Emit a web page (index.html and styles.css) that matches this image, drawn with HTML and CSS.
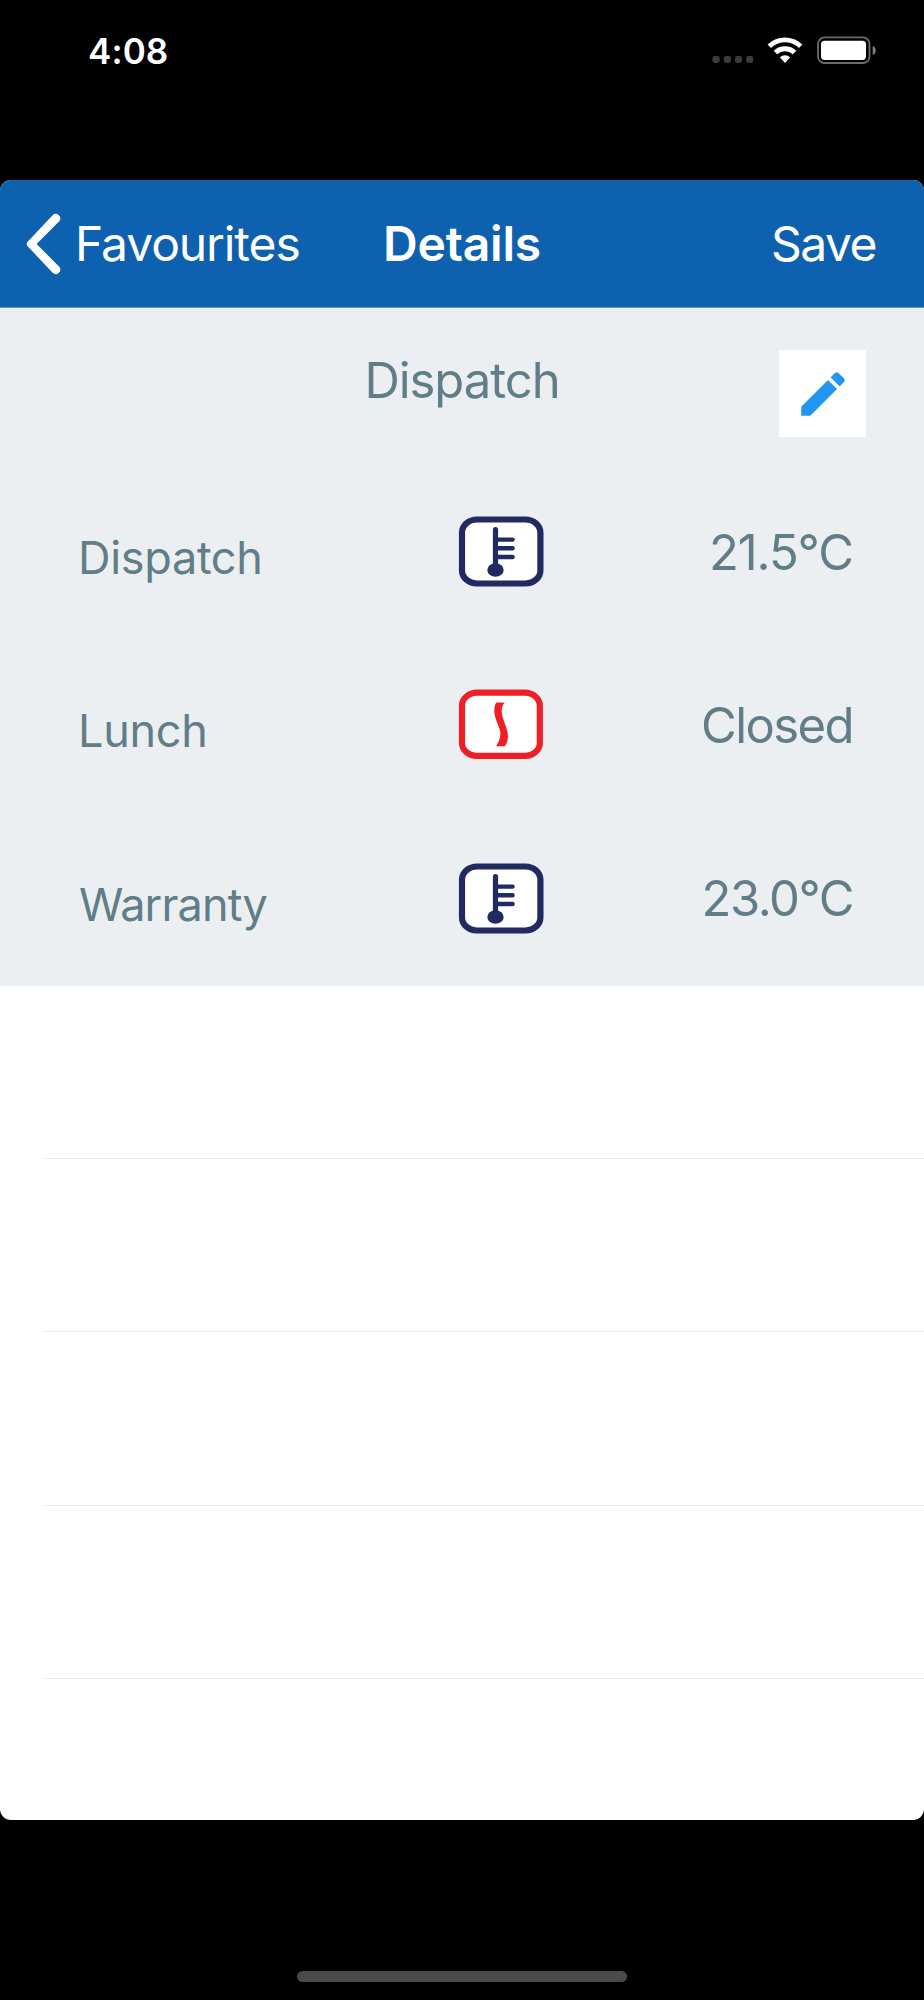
FILE: index.html
```html
<!DOCTYPE html>
<html lang="en">
<head>
<meta charset="utf-8">
<title>Details</title>
<link rel="stylesheet" href="styles.css">
</head>
<body>
<svg class="defs" aria-hidden="true">
  <symbol id="thermometer" viewBox="0 0 86 72">
    <rect x="4" y="3.500" width="78.400" height="64" rx="15" ry="13" fill="#fff" stroke="#212b62" stroke-width="6.200"/>
    <g stroke="#212b62" stroke-linecap="round" fill="none">
      <path d="M37.5 13.6V52" stroke-width="5.2"/>
      <path d="M37.5 23.6H54.6M37.5 32.2H54.6M37.5 41H54.6" stroke-width="4.4"/>
    </g>
    <ellipse cx="37.5" cy="54" rx="8.2" ry="6.8" fill="#212b62"/>
  </symbol>
  <symbol id="contact" viewBox="0 0 86 72">
    <rect x="4" y="3.7" width="77.8" height="63.2" rx="15" ry="13" fill="#fff" stroke="#ee1f27" stroke-width="6.200"/>
    <path d="M38.300 13.500H46.600C43.500 17.500 43.200 22 44.400 27C46 33.500 50 41 50 47.500C50 51 48.800 54.500 47 57.300H38C41 53 43 47 42.200 42.500C41.200 37 36.300 29.500 36.300 22C36.300 18.500 36.800 15.500 38.300 13.500Z" fill="#ee1f27"/>
  </symbol>
</svg>
<div class="status">
  <span class="time">4:08</span>
  <div class="indicators">
    <svg class="dots" width="42" height="8" viewBox="0 0 42 8" fill="#3b3b3b"><rect x=".5" y="0" width="7.2" height="7" rx="2.4"/><rect x="11.700" y="0" width="7.200" height="7" rx="2.400"/><rect x="22.900" y="0" width="7.200" height="7" rx="2.400"/><rect x="34.100" y="0" width="7.200" height="7" rx="2.400"/></svg>
    <svg class="wifi" width="36" height="28" viewBox="0 0 36 28" fill="#fff"><path d="M.6 8.400a25.200 25.200 0 0 1 34.800 0L32 12a20.200 20.200 0 0 0-28 0z"/><path d="M6.700 14.800a16.500 16.500 0 0 1 22.600 0L25.800 18.300a11.400 11.400 0 0 0-15.600 0z"/><path d="M12.900 21.300a7.600 7.600 0 0 1 10.200 0L18 27z"/></svg>
    <svg class="battery" width="60" height="28" viewBox="0 0 60 28"><rect x="1" y="1.400" width="51.500" height="25.600" rx="6.500" fill="none" stroke="#6b6b6b" stroke-width="1.800"/><rect x="4" y="4.700" width="45" height="19.200" rx="3.600" fill="#fff"/><path d="M55.700 9.900c4 1.500 4 7.500 0 9z" fill="#808080"/></svg>
  </div>
</div>
<main class="sheet">
  <header class="nav">
    <div class="back">
      <svg width="37" height="62" viewBox="0 0 37 62" fill="#fff"><path d="M27.600 2.300a4.500 4.500 0 0 1 6.900 5.700L11.600 31L34.500 54a4.500 4.500 0 0 1-6.900 5.700L2.200 32.800q-1-1.800 0-3.600z"/></svg>
      <span class="back-label">Favourites</span>
    </div>
    <span class="title">Details</span>
    <span class="save">Save</span>
  </header>
  <section class="details">
    <div class="name">
      <span class="name-label">Dispatch</span>
      <div class="edit"><svg width="58" height="58" viewBox="0 0 24 24" fill="#2196f3"><path d="M3 17.250V21h3.750L17.810 9.940l-3.750-3.750L3 17.250zM20.710 7.040c.39-.39.39-1.020 0-1.410l-2.340-2.340c-.39-.39-1.020-.39-1.410 0l-1.830 1.830 3.750 3.750 1.830-1.830z"/></svg></div>
    </div>
    <div class="row"><span class="label">Dispatch</span><svg class="icon"><use href="#thermometer"/></svg><span class="value">21.5°C</span></div>
    <div class="row"><span class="label">Lunch</span><svg class="icon"><use href="#contact"/></svg><span class="value closed">Closed</span></div>
    <div class="row"><span class="label warranty">Warranty</span><svg class="icon"><use href="#thermometer"/></svg><span class="value wide">23.0°C</span></div>
  </section>
  <div class="empty"></div><div class="empty"></div><div class="empty"></div><div class="empty"></div>
</main>
<div class="home"></div>
</body>
</html>
```
FILE: styles.css
```css
* { box-sizing: border-box; }
body {
  margin: 0;
  width: 924px;
  height: 2000px;
  overflow: hidden;
  background: #000;
  font-family: Inter, "Liberation Sans", sans-serif;
  display: flex;
  flex-direction: column;
}
svg { display: block; flex: none; }
span { white-space: nowrap; }
.defs { width: 0; height: 0; position: absolute; }
.status {
  height: 180px;
  flex: none;
  display: flex;
  justify-content: space-between;
  align-items: flex-start;
  padding: 29px 47px 0 88px;
  color: #fff;
}
.time { font-size: 35px; line-height: 44px; font-weight: 570; letter-spacing: 0.1px; }
.indicators { display: flex; align-items: flex-end; padding-top: 7px; }
.dots { margin-right: 13px; }
.wifi { margin-right: 14px; }
.sheet {
  height: 1640px;
  flex: none;
  background: #fff;
  border-radius: 11px;
  overflow: hidden;
}
.nav {
  height: 128px;
  background: #0e61af;
  border-bottom: 1px solid #5f92c4;
  color: #fff;
  font-size: 48px;
  line-height: 58px;
  display: grid;
  grid-template-columns: 1fr auto 1fr;
  align-items: center;
  padding: 0 25px;
}
.back { display: flex; align-items: center; gap: 13px; }
.back-label { letter-spacing: -1.1px; }
.title { font-weight: 600; letter-spacing: -0.2px; }
.save { justify-self: end; margin-right: 23px; letter-spacing: -1.5px; }
.details { height: 678px; background: #ebeff2; color: #607d88; }
.name {
  height: 158px;
  display: grid;
  grid-template-columns: 1fr auto 1fr;
  align-items: start;
  padding: 42px 58px 0;
}
.name-label { grid-column: 2; font-size: 49px; line-height: 60px; letter-spacing: -1.05px; padding-top: 1px; }
.edit {
  justify-self: end;
  width: 87px;
  height: 87px;
  background: #fff;
  display: flex;
  align-items: center;
  justify-content: center;
}
.row {
  height: 173.3px;
  display: grid;
  grid-template-columns: 380px 86px 1fr;
  align-items: start;
  padding: 0 71px 0 78px;
}
.label { font-size: 45px; line-height: 56px; padding-top: 64px; letter-spacing: -0.3px; }
.warranty { letter-spacing: -0.85px; padding-left: 1px; }
.icon { width: 86px; height: 72px; margin-top: 50px; }
.value { font-size: 49px; line-height: 60px; padding-top: 56.5px; justify-self: end; letter-spacing: -1.1px; }
.closed { letter-spacing: -1.6px; }
.wide { letter-spacing: -1.5px; }
.empty { height: 173.2px; margin-left: 43px; border-bottom: 1px solid #ededef; }
.home { width: 330px; height: 11px; margin: 151px 0 0 297px; border-radius: 6px; background: #4a4a4a; flex: none; }
```
